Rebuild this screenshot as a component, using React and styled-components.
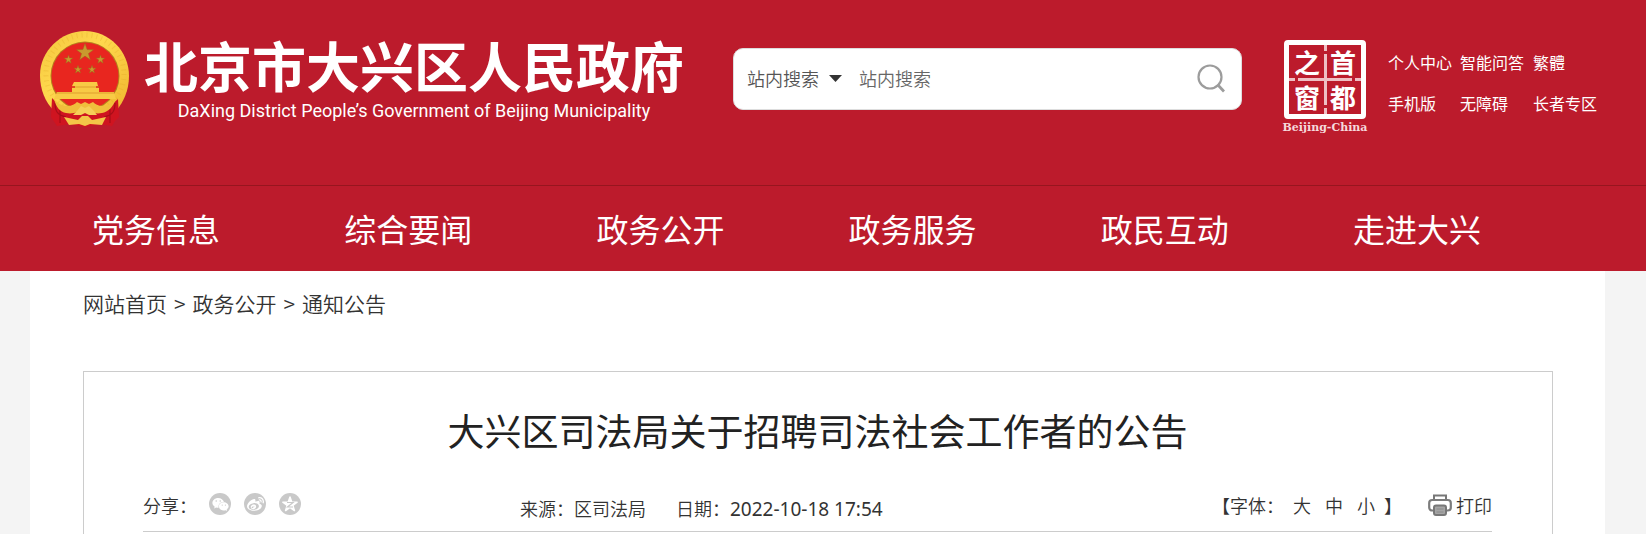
import React, { useState } from 'react';
import styled, { createGlobalStyle } from 'styled-components';
import { FaWeixin, FaWeibo } from 'react-icons/fa';

const GlobalStyle = createGlobalStyle`
  * {
    box-sizing: border-box;
  }

  body {
    margin: 0;
    background: #f4f4f4;
    color: #333;
    font-family: "Noto Sans CJK SC", "Noto Sans", sans-serif;
    font-weight: 350;
    font-size: 18px;
  }

  a {
    color: inherit;
    text-decoration: none;
  }

  button {
    border: none;
    background: none;
    padding: 0;
    font: inherit;
    color: inherit;
    cursor: pointer;
  }
`;

const Header = styled.header`
  background: #bc1b2c;
  color: #fff;
`;

const TopBar = styled.div`
  display: flex;
  align-items: flex-start;
  height: 185px;
  padding: 31px 49px 0 40px;
`;

const Brand = styled.a`
  display: flex;
  flex: none;
  gap: 14px;

  svg {
    flex: none;
  }
`;

const BrandText = styled.span`
  display: flex;
  flex-direction: column;
  align-items: center;
  padding-top: 4px;
  white-space: nowrap;
`;

const BrandName = styled.span`
  font-size: 54px;
  font-weight: 700;
  line-height: 60px;
`;

const BrandEnglish = styled.span`
  font-family: Roboto, sans-serif;
  font-size: 18px;
  font-weight: 400;
  line-height: 32px;
`;

const SearchBox = styled.form`
  display: flex;
  align-items: center;
  flex: 1;
  min-width: 0;
  height: 62px;
  margin: 17px 38px 0 49px;
  padding: 0 16px 2px 13px;
  background: #fff;
  border: 1px solid #ddd;
  border-radius: 10px;
  color: #333;

  select,
  input {
    appearance: none;
    border: none;
    outline: none;
    padding: 0;
    background: none;
    font: inherit;
    color: #555;
  }

  select {
    width: 73px;
  }

  input {
    flex: 1;
    min-width: 0;
    margin-left: 17px;
  }

  input::placeholder {
    color: #666;
    opacity: 1;
  }

  button {
    display: flex;
  }
`;

const SearchScope = styled.label`
  display: flex;
  align-items: center;
  gap: 9px;
`;

const CapitalSeal = styled.a`
  display: flex;
  flex-direction: column;
  align-items: center;
  flex: none;
  width: 90px;
  margin-top: 9px;
`;

const SealFrame = styled.span`
  display: grid;
  grid-template-columns: 1fr 1fr;
  grid-template-rows: 1fr 1fr;
  width: 82px;
  height: 79px;
  border: 5px solid #fff;
  border-radius: 4px;
  background:
    linear-gradient(90deg, #eebfc4 9%, transparent 9% 13%, #eebfc4 13% 87%, transparent 87% 91%, #eebfc4 91%) center / 100% 3px no-repeat,
    linear-gradient(#eebfc4 9%, transparent 9% 13%, #eebfc4 13% 87%, transparent 87% 91%, #eebfc4 91%) center / 3px 100% no-repeat;
`;

const SealChar = styled.span`
  display: flex;
  align-items: center;
  justify-content: center;
  font-size: 26px;
  font-weight: 700;
  line-height: 32px;
`;

const SealCaption = styled.span`
  font-family: "DejaVu Serif", serif;
  font-size: 11px;
  font-weight: 700;
  line-height: 18px;
  white-space: nowrap;
  color: #f6d9dc;
`;

const ToolLinks = styled.nav`
  display: grid;
  grid-template-columns: 64px 65px 64px;
  column-gap: 8px;
  row-gap: 17px;
  margin: 19px 0 0 18px;
  font-size: 16px;
  font-weight: 400;
  line-height: 24px;
  white-space: nowrap;
`;

const MainNav = styled.nav`
  display: flex;
  height: 86px;
  padding: 0 103px 0 30px;
  border-top: 1px solid #97151f;
`;

const NavLink = styled.a`
  flex: 1;
  text-align: center;
  font-size: 32px;
  font-weight: 400;
  line-height: 84px;
`;

const Content = styled.main`
  margin: 0 41px 0 30px;
  padding: 0 52px 0 53px;
  background: #fff;
`;

const Breadcrumb = styled.nav`
  display: flex;
  gap: 7px;
  height: 100px;
  padding-top: 16px;
  font-size: 21px;
  line-height: 32px;
`;

const Article = styled.article`
  border: 1px solid #ccc;
  border-bottom: none;
  padding: 0 60px 2px 59px;
`;

const Title = styled.h1`
  margin: 0;
  padding-top: 30px;
  text-align: center;
  color: #222;
  font-size: 37px;
  font-weight: 400;
  line-height: 56px;
`;

const MetaRow = styled.div`
  display: flex;
  align-items: flex-start;
  height: 74px;
  padding-top: 33px;
  border-bottom: 1px solid #ccc;
  line-height: 28px;
`;

const Share = styled.div`
  display: flex;
  gap: 13px;
  flex: none;
  width: 377px;
`;

const ShareLabel = styled.span`
  flex: none;
  width: 53px;
  white-space: nowrap;
`;

const ShareButton = styled.button`
  display: flex;
  align-items: center;
  justify-content: center;
  width: 22px;
  height: 22px;
  margin-top: 2px;
  border-radius: 50%;
  background: #c9c9c9;
  color: #fff;
`;

const Source = styled.div`
  display: flex;
  gap: 30px;
  flex: 1;
  padding-top: 3px;

  time {
    font-family: "Noto Sans", sans-serif;
    font-size: 19px;
    font-weight: 400;
  }
`;

const FontSizer = styled.div`
  display: flex;
  gap: 9px;
  margin-right: 26px;
`;

const SizeButtons = styled.span`
  display: flex;
  gap: 14px;
`;

const PrintButton = styled.button`
  display: flex;
  align-items: center;
  gap: 4px;
  height: 28px;
`;

const navItems = ['党务信息', '综合要闻', '政务公开', '政务服务', '政民互动', '走进大兴'];
const toolItems = ['个人中心', '智能问答', '繁體', '手机版', '无障碍', '长者专区'];
const crumbs = ['网站首页', '政务公开', '通知公告'];
const fontSizes = ['大', '中', '小'];

const starPoints = (cx, cy, r) => {
  const points = [];
  for (let i = 0; i < 10; i++) {
    const radius = i % 2 === 0 ? r : r * 0.4;
    const angle = (Math.PI / 5) * i - Math.PI / 2;
    points.push(`${cx + radius * Math.cos(angle)},${cy + radius * Math.sin(angle)}`);
  }
  return points.join(' ');
};

const Emblem = () => (
  <svg width="90" height="97" viewBox="0 0 90 97" aria-hidden="true">
    <defs>
      <linearGradient id="gold" x1="0" y1="0" x2="1" y2="1">
        <stop offset="0" stopColor="#f3c63c" />
        <stop offset="0.4" stopColor="#ffd84e" />
        <stop offset="1" stopColor="#eeb42c" />
      </linearGradient>
    </defs>
    <path d="M45 0C69 0 89 20 89 45c0 15-6 26-12 34l-8 9H21l-8-9C6 71 0 60 0 44 0 20 21 0 45 0z" fill="url(#gold)" />
    <circle cx="45" cy="43" r="39" fill="none" stroke="#e2a425" strokeWidth="5" strokeDasharray="1 4" opacity="0.3" />
    <circle cx="45" cy="45" r="34.5" fill="#b5801d" />
    <circle cx="45" cy="45" r="33.5" fill="#e8261f" />
    <g fill="#c99a2e" stroke="#9d6a1c" strokeWidth="0.5">
      <polygon points={starPoints(45, 21.5, 9)} />
      <polygon points={starPoints(28.5, 28.5, 4.5)} />
      <polygon points={starPoints(60.5, 28.5, 4.5)} />
      <polygon points={starPoints(38, 38.5, 4.2)} />
      <polygon points={starPoints(52, 38.5, 4.2)} />
    </g>
    <path d="M34 51h23l1 4h-2v2h3v4h15l2 7H14l3-7h15v-4h3v-2h-3z" fill="#f8ca45" />
    <path d="M32 56h27M16 62h58" stroke="#d58c24" strokeWidth="0.7" />
    <path d="M12 67l11 11c6 4 11 2 15-5h14c4 7 10 9 15 5l11-10 1 18-4 4-3 5-12-2-15 3-16-3-12 2-4-6-2-3z" fill="#cf1420" />
    <path d="M15 72c0 9 3 12 11 14M75 72c0 9-3 12-11 14M20 78v14M70 78v14" fill="none" stroke="#a70e18" strokeWidth="1.2" />
    <path d="M14 68c4 5 9 7 13 7 5 0 8-2 10-4l4 2 4-2 4 2 4-2c2 2 5 4 10 4 4 0 9-2 13-7-3 8-8 13-14 14-5 1-8 0-12-1-4-1-8-1-12 0-4 1-7 2-12 1-6-1-10-6-12-14z" fill="#f0be3c" />
    <path d="M37 80l4-5 4 2 4-2 5 5 3 4h-8l-4-2-4 2h-8z" fill="#f6cf58" />
    <path d="M24 86l14 3 4-4h6l4 4 14-3-4 8-12-1-5 2-6-2-10 1z" fill="#f3c548" />
  </svg>
);

const SearchIcon = () => (
  <svg width="28" height="29" viewBox="0 0 28 29" fill="none" stroke="#9c9c9c" strokeWidth="2.2" aria-hidden="true">
    <circle cx="13" cy="13" r="11.5" />
    <path d="M20.5 20.5L27 27.5" strokeWidth="2.8" />
  </svg>
);

const QzoneIcon = () => (
  <svg width="22" height="22" viewBox="0 0 22 22" aria-hidden="true">
    <polygon points={starPoints(11, 11.5, 7.5)} fill="#fff" stroke="#fff" strokeWidth="1.5" strokeLinejoin="round" />
    <path d="M8 9.5h6L8.5 14H14" fill="none" stroke="#c9c9c9" strokeWidth="1.2" />
  </svg>
);

const PrinterIcon = () => (
  <svg width="24" height="22" viewBox="0 0 24 22" aria-hidden="true">
    <path d="M6 6V1.5h12V6" fill="none" stroke="#777" strokeWidth="2" />
    <rect x="1.2" y="6" width="21.6" height="10.5" rx="3" fill="#fff" stroke="#7c7c7c" strokeWidth="2.2" />
    <rect x="6" y="11.5" width="12" height="9.5" rx="2" fill="#a5a5a5" stroke="#777" strokeWidth="2" />
    <path d="M8.5 15h7M8.5 18h7" stroke="#8a8a8a" strokeWidth="1" />
  </svg>
);

const App = () => {
  const [keyword, setKeyword] = useState('');

  const handleSubmit = (e) => {
    e.preventDefault();
  };

  return (
    <>
      <GlobalStyle />
      <Header>
        <TopBar>
          <Brand href="#">
            <Emblem />
            <BrandText>
              <BrandName>北京市大兴区人民政府</BrandName>
              <BrandEnglish>DaXing District People’s Government of Beijing Municipality</BrandEnglish>
            </BrandText>
          </Brand>
          <SearchBox onSubmit={handleSubmit}>
            <SearchScope>
              <select name="scope" aria-label="搜索范围">
                <option>站内搜索</option>
              </select>
              <svg width="13" height="7" viewBox="0 0 13 7" aria-hidden="true">
                <path d="M0 0h13L6.5 7z" fill="#333" />
              </svg>
            </SearchScope>
            <input type="text" name="keyword" aria-label="站内搜索" placeholder="站内搜索"
              value={keyword} onChange={(e) => setKeyword(e.target.value)} />
            <button type="submit" aria-label="搜索"><SearchIcon /></button>
          </SearchBox>
          <CapitalSeal href="#">
            <SealFrame>
              <SealChar>之</SealChar>
              <SealChar>首</SealChar>
              <SealChar>窗</SealChar>
              <SealChar>都</SealChar>
            </SealFrame>
            <SealCaption>Beijing-China</SealCaption>
          </CapitalSeal>
          <ToolLinks>
            {toolItems.map((item) => <a href="#" key={item}>{item}</a>)}
          </ToolLinks>
        </TopBar>
        <MainNav>
          {navItems.map((item) => <NavLink href="#" key={item}>{item}</NavLink>)}
        </MainNav>
      </Header>
      <Content>
        <Breadcrumb>
          {crumbs.map((crumb, i) => (
            <React.Fragment key={crumb}>
              {i > 0 && <span>&gt;</span>}
              <a href="#">{crumb}</a>
            </React.Fragment>
          ))}
        </Breadcrumb>
        <Article>
          <Title>大兴区司法局关于招聘司法社会工作者的公告</Title>
          <MetaRow>
            <Share>
              <ShareLabel>分享：</ShareLabel>
              <ShareButton aria-label="微信"><FaWeixin size={17} /></ShareButton>
              <ShareButton aria-label="微博"><FaWeibo size={17} /></ShareButton>
              <ShareButton aria-label="QQ空间"><QzoneIcon /></ShareButton>
            </Share>
            <Source>
              <span>来源：区司法局</span>
              <span>日期：<time>2022-10-18 17:54</time></span>
            </Source>
            <FontSizer>
              <span>【字体：</span>
              <SizeButtons>
                {fontSizes.map((size) => <button key={size}>{size}</button>)}
              </SizeButtons>
              <span>】</span>
            </FontSizer>
            <PrintButton onClick={() => window.print()}>
              <PrinterIcon />
              打印
            </PrintButton>
          </MetaRow>
        </Article>
      </Content>
    </>
  );
};

export default App;
